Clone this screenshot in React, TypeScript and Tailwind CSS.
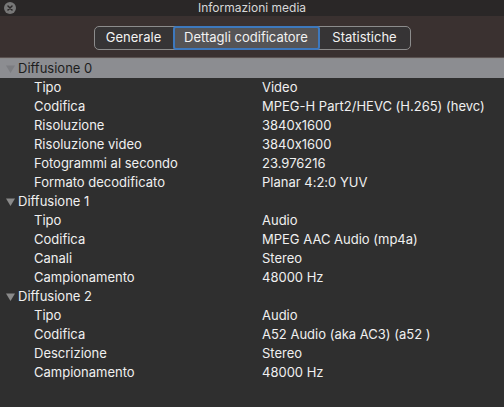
import React from "react";

type Row = { label: string; value: string };
type Group = { title: string; rows: Row[]; selected?: boolean };

const groups: Group[] = [
  {
    title: "Diffusione 0",
    selected: true,
    rows: [
      { label: "Tipo", value: "Video" },
      { label: "Codifica", value: "MPEG-H Part2/HEVC (H.265) (hevc)" },
      { label: "Risoluzione", value: "3840x1600" },
      { label: "Risoluzione video", value: "3840x1600" },
      { label: "Fotogrammi al secondo", value: "23.976216" },
      { label: "Formato decodificato", value: "Planar 4:2:0 YUV" },
    ],
  },
  {
    title: "Diffusione 1",
    rows: [
      { label: "Tipo", value: "Audio" },
      { label: "Codifica", value: "MPEG AAC Audio (mp4a)" },
      { label: "Canali", value: "Stereo" },
      { label: "Campionamento", value: "48000 Hz" },
    ],
  },
  {
    title: "Diffusione 2",
    rows: [
      { label: "Tipo", value: "Audio" },
      { label: "Codifica", value: "A52 Audio (aka AC3) (a52 )" },
      { label: "Descrizione", value: "Stereo" },
      { label: "Campionamento", value: "48000 Hz" },
    ],
  },
];

function Triangle({ color }: { color: string }) {
  return (
    <svg width="9" height="8" viewBox="0 0 9 8" className="shrink-0">
      <path d="M0 0.5 L9 0.5 L4.5 8 Z" fill={color} />
    </svg>
  );
}

export default function App() {
  return (
    <div
      className="w-[504px] h-[407px] overflow-hidden bg-[#2f2f2f] flex flex-col text-[13px] [font-feature-settings:'calt'_0]"
      style={{ fontFamily: "Inter, 'Noto Sans', sans-serif" }}
    >
      {/* Title bar */}
      <div className="h-[16px] bg-[#2a2727] flex items-center relative">
        <div className="absolute left-[4px] top-[2px] w-[12px] h-[12px] rounded-full bg-[#777] flex items-center justify-center">
          <svg width="6" height="6" viewBox="0 0 6 6">
            <path d="M1 1 L5 5 M5 1 L1 5" stroke="#2a2727" strokeWidth="1.5" strokeLinecap="round" />
          </svg>
        </div>
        <div className="flex-1 text-center text-[12px] text-[#d8d8d8] leading-none">Informazioni media</div>
      </div>
      {/* Toolbar */}
      <div className="h-[42px] bg-[#3a3130] flex items-center justify-center border-b border-[#5a5150]">
        <div className="flex h-[24px] mt-[3px] rounded-[5px] border border-[#8c8c8c] bg-[#363435] text-[#f2f2f2]">
          <div className="w-[78px] flex items-center justify-center">Generale</div>
          <div className="w-[147px] flex items-center justify-center bg-[#555456] border-2 border-[#3d78bd] rounded-[3px] -my-[1px]">
            Dettagli codificatore
          </div>
          <div className="w-[90px] flex items-center justify-center">Statistiche</div>
        </div>
      </div>
      {/* Outline */}
      <div className="flex flex-col border-t border-[#8a8a8a]">
        {groups.map((g) => (
          <div key={g.title} className="flex flex-col">
            <div
              className={
                "h-[19px] flex items-center pl-[6px] gap-[3px] " +
                (g.selected ? "bg-[#8c8d91] text-[#1d1d1d]" : "text-[#f0f0f0]")
              }
            >
              <Triangle color={g.selected ? "#7c7d81" : "#8a8a8a"} />
              <span>{g.title}</span>
            </div>
            {g.rows.map((r, i) => (
              <div key={i} className="h-[19px] flex items-center text-[#f0f0f0]">
                <span className="pl-[34px] w-[262px] shrink-0">{r.label}</span>
                <span>{r.value}</span>
              </div>
            ))}
          </div>
        ))}
      </div>
    </div>
  );
}
